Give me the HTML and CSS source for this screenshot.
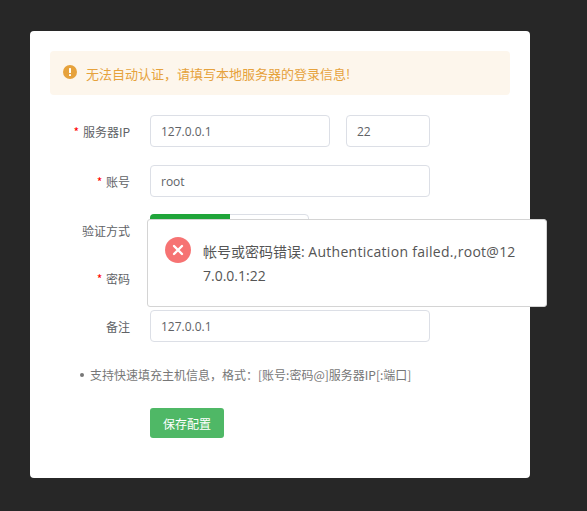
FILE: index.html
```html
<!DOCTYPE html>
<html lang="en">
<head>
  <meta charset="UTF-8">
  <title>服务器配置</title>
  <link rel="stylesheet" href="styles.css">
</head>
<body>
  <div id="app">
    <div class="card">
      <div class="alert">
        <svg class="alert-icon" width="14" height="14" viewBox="0 0 14 14">
          <circle cx="7" cy="7" r="7" fill="#e6a23c"></circle>
          <rect x="6" y="3" width="2" height="5" rx="0.6" fill="#fff"></rect>
          <rect x="6" y="9" width="2" height="2" rx="0.6" fill="#fff"></rect>
        </svg>
        <span>无法自动认证，请填写本地服务器的登录信息!</span>
      </div>

      <div class="row row-ip">
        <label class="label"><i>*</i> 服务器IP</label>
        <div class="input input-ip">127.0.0.1</div>
        <div class="input input-port">22</div>
      </div>
      <div class="row row-user">
        <label class="label"><i>*</i> 账号</label>
        <div class="input">root</div>
      </div>
      <div class="row row-auth">
        <label class="label">验证方式</label>
        <div class="segment">
          <div class="segment-on"></div>
        </div>
      </div>
      <div class="row row-pass">
        <label class="label"><i>*</i> 密码</label>
        <div class="input"></div>
      </div>
      <div class="row">
        <label class="label">备注</label>
        <div class="input">127.0.0.1</div>
      </div>

      <p class="tip"><b></b>支持快速填充主机信息，格式：[账号:密码@]服务器IP[:端口]</p>
      <button class="save">保存配置</button>
    </div>

    <div class="msg">
      <svg class="msg-icon" width="26" height="26" viewBox="0 0 26 26">
        <circle cx="13" cy="13" r="13" fill="#f56c6c" opacity="0.95"></circle>
        <path d="M9 9l8 8M17 9l-8 8" stroke="#fff" stroke-width="2.4" stroke-linecap="round"></path>
      </svg>
      <div class="msg-text">帐号或密码错误: <span class="msg-latin">Authentication failed.,root@</span>127.0.0.1:22</div>
    </div>
  </div>
</body>
</html>
```

FILE: styles.css
```css
* {
  box-sizing: border-box;
}
html, body {
  margin: 0;
  height: 100%;
  background-color: #272727;
}
body {
  font-family: "Noto Sans CJK SC", "Liberation Sans", sans-serif;
  font-size: 12px;
  color: #606266;
}
#app {
  position: relative;
  width: 587px;
  height: 511px;
  padding: 31px 0 0 30px;
  overflow: hidden;
}
.card {
  width: 500px;
  height: 447px;
  padding: 20px;
  background-color: #fff;
  border-radius: 4px;
}
.alert {
  display: flex;
  align-items: center;
  height: 44px;
  padding: 0 13px;
  margin-bottom: 20px;
  background-color: #fdf6ec;
  border-radius: 4px;
  color: #e6a23c;
  font-size: 13px;
}
.alert-icon {
  margin: -2px 9px 0 0;
  flex: none;
}
.row {
  display: flex;
  align-items: center;
  height: 32px;
  margin-bottom: 16px;
}
.row-ip {
  margin-bottom: 18px;
}
.row-user {
  margin-bottom: 17px;
}
.label {
  width: 80px;
  margin-right: 20px;
  text-align: right;
  font-size: 12px;
  color: #606266;
}
.label i {
  margin-right: 1px;
  font-style: normal;
  color: #f00;
}
.input {
  width: 280px;
  height: 32px;
  padding: 0 10px;
  line-height: 31px;
  font-family: "Open Sans", "Noto Sans CJK SC", sans-serif;
  font-size: 12px;
  color: #606266;
  border: 1px solid #dcdfe6;
  border-radius: 4px;
}
.input-ip {
  width: 180px;
  margin-right: 16px;
}
.input-port {
  width: 84px;
}
.segment {
  align-self: flex-start;
  width: 159px;
  height: 32px;
  border: 1px solid #dcdfe6;
  border-radius: 4px;
}
.segment-on {
  width: 80px;
  height: 32px;
  margin: -1px 0 0 -1px;
  background-color: #20a53a;
  border-radius: 4px 0 0 4px;
}
.tip {
  display: flex;
  align-items: center;
  margin: 24px 0 0 30px;
  font-size: 12px;
  color: #777;
  white-space: nowrap;
}
.tip b {
  width: 4px;
  height: 4px;
  margin-right: 6px;
  background-color: #777;
  border-radius: 50%;
}
.save {
  display: block;
  width: 74px;
  height: 30px;
  margin: 25px 0 0 100px;
  padding: 0;
  font-family: inherit;
  font-size: 12px;
  color: #fff;
  background-color: #4fb866;
  border: none;
  border-radius: 3px;
}
.msg {
  position: absolute;
  left: 147px;
  top: 219px;
  display: flex;
  width: 400px;
  height: 88px;
  padding: 17px 20px 0 17px;
  background-color: #fff;
  border: 1px solid #d4d4d4;
  border-radius: 3px;
}
.msg-icon {
  flex: none;
  margin-right: 12px;
}
.msg-text {
  width: 316px;
  margin-top: 3px;
  font-family: "Open Sans", "Noto Sans CJK SC", sans-serif;
  font-size: 14px;
  line-height: 24px;
  color: #555;
  word-break: break-all;
}
.msg-latin {
  letter-spacing: 0.28px;
}
```
